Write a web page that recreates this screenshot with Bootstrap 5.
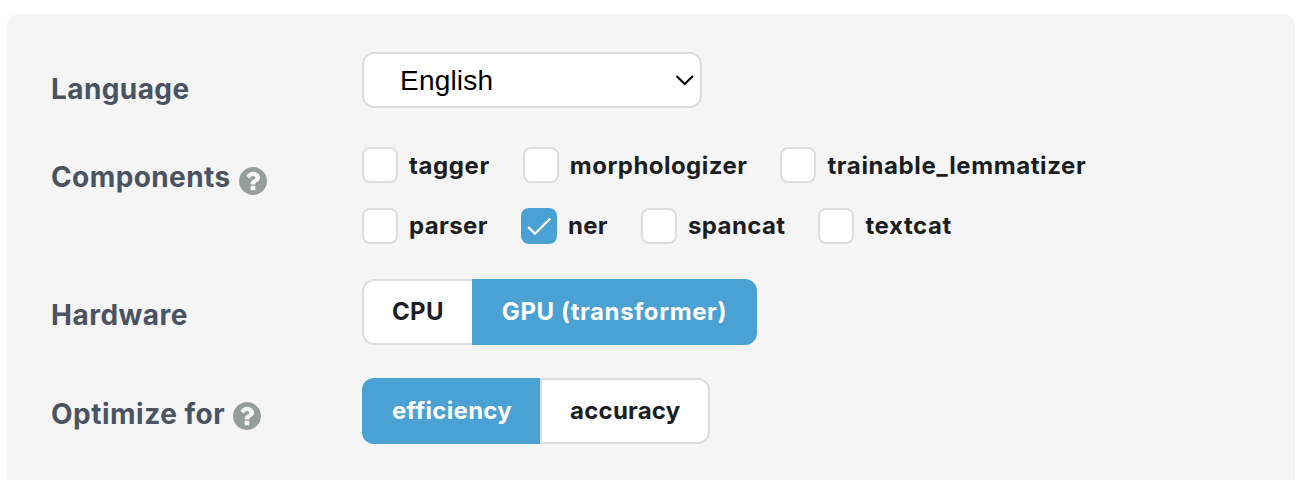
<!DOCTYPE html>
<html lang="en">
<head>
<meta charset="utf-8">
<meta name="viewport" content="width=device-width, initial-scale=1">
<title>Quickstart</title>
<link href="https://cdn.jsdelivr.net/npm/bootstrap@5.3.0/dist/css/bootstrap.min.css" rel="stylesheet">
<style>
body{font-family:Inter,sans-serif;background:#fff;overflow:hidden;color:#1a1e23}
.panel{margin:14px 7px 0;height:480px;padding:38px 44px;background:#f5f5f5;border-radius:12px}
.field-label{width:311px;flex:none;font-size:28px;line-height:34px;font-weight:700;color:#4a5361;letter-spacing:.4px;white-space:nowrap}
.field-label.loose{letter-spacing:.5px}
.help{width:28px;height:28px;fill:#969e9b;margin:4px 0 0 8px}
.help.low{margin-top:6px;margin-bottom:-2px}
.lang{width:340px;height:56px;border:2px solid #ddd;border-radius:12px;padding:1px 0 0 36px;font:28px/51px "Liberation Sans",sans-serif;letter-spacing:.2px;color:#000;background:#fff;background-image:none}
.lang-wrap{width:340px}
.chev{right:8px;top:22px;width:19px;height:12px;pointer-events:none}
.opt{font-size:24px;line-height:36px;font-weight:700;letter-spacing:.38px;white-space:nowrap;margin-right:33px}
.first-row span{padding-top:1px}
.mid{letter-spacing:.46px}
.wide{letter-spacing:.6px}
.snug{letter-spacing:.2px}
.opt input.form-check-input{width:36px;height:36px;margin:0 11px 0 0;border:2px solid #ddd;border-radius:8px;background-color:#fff;flex:none}
.opt input.form-check-input:checked{background-color:#4aa1d3;border-color:#4aa1d3;background-size:36px 36px;background-image:url("data:image/svg+xml,%3Csvg xmlns='http://www.w3.org/2000/svg' viewBox='0 0 36 36'%3E%3Cpath d='M7.200 19.200 14 25.700 29.200 10.500' fill='none' stroke='%23fff' stroke-width='2.300'/%3E%3C/svg%3E")}
.choice{height:66px;border:2px solid #ddd;border-radius:12px;padding:0 28px;font-size:24px;font-weight:700;letter-spacing:.3px;line-height:62px;background:#fff;color:#1a1e23}
.choice.wide{letter-spacing:.6px}
.choice.snug{letter-spacing:.2px}
.choice.active{background:#4aa1d3!important;border-color:#4aa1d3!important;color:#fff!important}
</style>
</head>
<body>
<main class="panel d-flex flex-column">
  <div class="d-flex" style="margin-bottom:39px">
    <label class="field-label" for="lang" style="padding-top:20px">Language</label>
    <div class="lang-wrap position-relative">
      <select id="lang" class="lang form-select"><option>English</option></select>
      <svg class="chev position-absolute" viewBox="0 0 19 12"><path d="M1.500 2 9.700 10 17.900 2" fill="none" stroke="#000" stroke-width="2"/></svg>
    </div>
  </div>
  <div class="d-flex" style="margin-bottom:35px">
    <div class="field-label d-flex align-items-center align-self-start" style="padding-top:13px">Components<svg class="help low" viewBox="0 0 1536 1536"><path d="M896 1248v-192q0-14-9-23t-23-9H672q-14 0-23 9t-9 23v192q0 14 9 23t23 9h192q14 0 23-9t9-23zm256-672q0-88-55.500-163T958 297t-170-41q-243 0-371 213-15 24 8 42l132 100q7 6 19 6 16 0 25-12 53-68 86-92 34-24 86-24 48 0 85.500 26t37.500 59q0 38-20 61t-68 45q-63 28-115.500 86.500T640 892v36q0 14 9 23t23 9h192q14 0 23-9t9-23q0-19 21.500-49.500t54.500-49.500q32-18 49-28.500t46-35 44.500-48 28-60.500 12.500-81zm384 192q0 209-103 385.500T1153.500 1433 768 1536t-385.500-103T103 1153.500 0 768t103-385.500T382.500 103 768 0t385.500 103T1433 382.500 1536 768z"/></svg></div>
    <div class="d-flex flex-column" style="gap:24px">
      <div class="d-flex first-row">
        <label class="opt wide d-flex"><input class="form-check-input" type="checkbox"><span>tagger</span></label>
        <label class="opt mid d-flex"><input class="form-check-input" type="checkbox"><span>morphologizer</span></label>
        <label class="opt wide d-flex"><input class="form-check-input" type="checkbox"><span>trainable_lemmatizer</span></label>
      </div>
      <div class="d-flex">
        <label class="opt d-flex"><input class="form-check-input" type="checkbox"><span>parser</span></label>
        <label class="opt d-flex"><input class="form-check-input" type="checkbox" checked><span>ner</span></label>
        <label class="opt d-flex"><input class="form-check-input" type="checkbox"><span>spancat</span></label>
        <label class="opt wide d-flex"><input class="form-check-input" type="checkbox"><span>textcat</span></label>
      </div>
    </div>
  </div>
  <div class="d-flex" style="margin-bottom:33px">
    <div class="field-label loose" style="padding-top:19px">Hardware</div>
    <div class="btn-group">
      <button class="btn choice border-end-0">CPU</button>
      <button class="btn choice wide active m-0">GPU (transformer)</button>
    </div>
  </div>
  <div class="d-flex">
    <div class="field-label loose d-flex align-items-center align-self-start" style="padding-top:19px">Optimize for<svg class="help" viewBox="0 0 1536 1536"><path d="M896 1248v-192q0-14-9-23t-23-9H672q-14 0-23 9t-9 23v192q0 14 9 23t23 9h192q14 0 23-9t9-23zm256-672q0-88-55.500-163T958 297t-170-41q-243 0-371 213-15 24 8 42l132 100q7 6 19 6 16 0 25-12 53-68 86-92 34-24 86-24 48 0 85.500 26t37.500 59q0 38-20 61t-68 45q-63 28-115.500 86.500T640 892v36q0 14 9 23t23 9h192q14 0 23-9t9-23q0-19 21.500-49.500t54.500-49.500q32-18 49-28.500t46-35 44.500-48 28-60.500 12.500-81zm384 192q0 209-103 385.500T1153.500 1433 768 1536t-385.500-103T103 1153.500 0 768t103-385.500T382.500 103 768 0t385.500 103T1433 382.500 1536 768z"/></svg></div>
    <div class="btn-group">
      <button class="btn choice active border-end-0">efficiency</button>
      <button class="btn choice snug m-0">accuracy</button>
    </div>
  </div>
</main>
<script src="https://cdn.jsdelivr.net/npm/bootstrap@5.3.0/dist/js/bootstrap.bundle.min.js"></script>
</body>
</html>
